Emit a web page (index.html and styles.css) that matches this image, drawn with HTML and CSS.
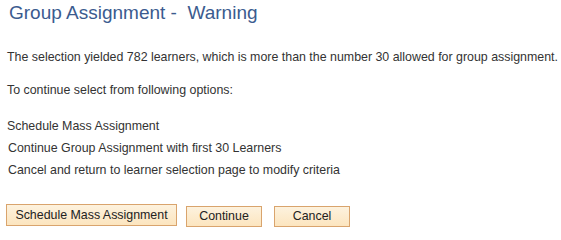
FILE: index.html
```html
<!DOCTYPE html>
<html>
<head>
<meta charset="utf-8">
<link rel="stylesheet" href="styles.css">
</head>
<body>
<div class="page">
  <h1 class="title">Group Assignment -&nbsp; Warning</h1>
  <p class="msg">The selection yielded 782 learners, which is more than the number 30 allowed for group assignment.</p>
  <p class="msg intro">To continue select from following options:</p>
  <ul class="options">
    <li>Schedule Mass Assignment</li>
    <li>Continue Group Assignment with first 30 Learners</li>
    <li>Cancel and return to learner selection page to modify criteria</li>
  </ul>
  <div class="actions">
    <button class="btn btn-wide">Schedule Mass Assignment</button>
    <button class="btn btn-std">Continue</button>
    <button class="btn btn-std btn-cancel">Cancel</button>
  </div>
</div>
</body>
</html>
```
FILE: styles.css
```css
html, body {
  margin: 0;
  padding: 0;
  background: #ffffff;
}
.page {
  font-family: "Liberation Sans", Arial, sans-serif;
  font-size: 12.4px;
  color: #333333;
  padding: 0 4px 0 7px;
}
.title {
  margin: 0;
  padding: 2px 0 0 2px;
  font-size: 19px;
  font-weight: normal;
  line-height: 22px;
  color: #3b5b8f;
}
.msg {
  margin: 0;
  line-height: 14px;
  white-space: nowrap;
}
.msg:first-of-type {
  margin-top: 26px;
}
.intro {
  margin-top: 19px;
}
.options {
  list-style: none;
  margin: 22px 0 0 0;
  padding: 0;
}
.options li {
  line-height: 14px;
  margin-bottom: 8px;
}
.options li:nth-child(2),
.options li:nth-child(3) {
  padding-left: 1px;
}
.actions {
  display: flex;
  align-items: flex-start;
  margin-top: 27px;
  margin-left: -1px;
}
.btn {
  font-family: "Liberation Sans", Arial, sans-serif;
  font-size: 12.4px;
  color: #222222;
  background: linear-gradient(#fdf2de, #fce5bf);
  border: 1px solid #d9a46d;
  border-radius: 0;
  height: 21px;
  padding: 0;
  margin: 0;
  line-height: 19px;
}
.btn-wide {
  width: 171px;
  height: 22px;
}
.btn-std {
  width: 76px;
  margin-left: 9px;
  margin-top: 2px;
}
.btn-cancel {
  margin-left: 12px;
}
```
